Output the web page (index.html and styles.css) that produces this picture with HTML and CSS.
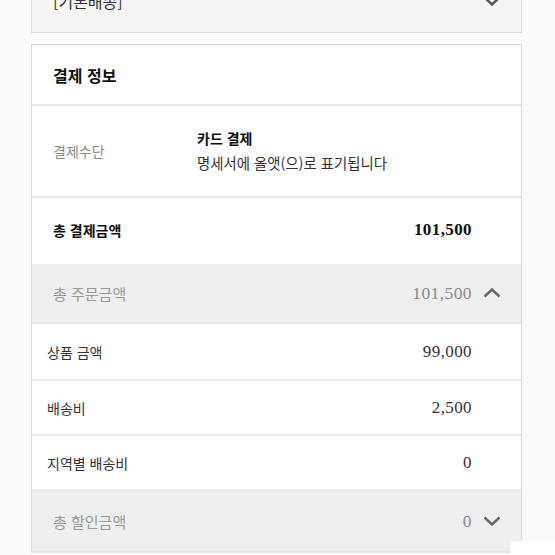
FILE: index.html
```html
<!DOCTYPE html>
<html lang="ko">
<head>
<meta charset="utf-8">
<link rel="stylesheet" href="styles.css">
</head>
<body>
<div class="page">
  <div class="ship-box">
    <span class="ship-text">[기본배송]</span>
    <svg class="chev chev-top" width="18" height="10" viewBox="0 0 18 10"><path d="M1.5 1.5 L9 8.5 L16.5 1.5" fill="none" stroke="#555" stroke-width="2.4"/></svg>
  </div>

  <section class="card">
    <div class="card-head">결제 정보</div>

    <div class="method-row">
      <div class="method-label">결제수단</div>
      <div class="method-body">
        <div class="method-title">카드 결제</div>
        <div class="method-desc">명세서에 올앳(으)로 표기됩니다</div>
      </div>
    </div>

    <div class="row row-total">
      <span class="lbl">총 결제금액</span>
      <span class="num num-bold">101,500</span>
    </div>

    <div class="row row-group">
      <span class="lbl">총 주문금액</span>
      <span class="num">101,500</span>
      <svg class="chev" width="18" height="10" viewBox="0 0 18 10"><path d="M1.5 8.5 L9 1.5 L16.5 8.5" fill="none" stroke="#666" stroke-width="2.4"/></svg>
    </div>

    <div class="row row-sub row-sub1">
      <span class="lbl">상품 금액</span>
      <span class="num">99,000</span>
    </div>
    <div class="row row-sub">
      <span class="lbl">배송비</span>
      <span class="num">2,500</span>
    </div>
    <div class="row row-sub">
      <span class="lbl">지역별 배송비</span>
      <span class="num">0</span>
    </div>

    <div class="row row-group row-last">
      <span class="lbl">총 할인금액</span>
      <span class="num">0</span>
      <svg class="chev" width="18" height="10" viewBox="0 0 18 10"><path d="M1.5 1.5 L9 8.5 L16.5 1.5" fill="none" stroke="#666" stroke-width="2.4"/></svg>
    </div>
  </section>
</div>
<div class="corner-patch"></div>
</body>
</html>
```

FILE: styles.css
```css
* { box-sizing: border-box; }
html, body {
  margin: 0;
  padding: 0;
  background: #fafafa;
  font-family: "Noto Sans CJK KR", "Noto Sans", sans-serif;
  color: #222;
  overflow: hidden;
}
.page {
  width: 491px;
  margin-left: 31px;
}
.ship-box {
  margin-top: -28px;
  height: 61px;
  background: #f5f5f5;
  border: 1px solid #dedede;
  border-top: none;
  display: flex;
  align-items: center;
  justify-content: space-between;
  padding: 0 20px 0 21px;
}
.ship-text {
  font-size: 16px;
  color: #333;
  margin-top: -2px;
}
.chev-top { margin-top: -2px; }
.card {
  margin-top: 11px;
  background: #fff;
  border: 1px solid #dcdcdc;
  border-bottom-width: 2px;
  border-bottom-color: #e4e4e4;
}
.card-head {
  height: 61px;
  display: flex;
  align-items: center;
  padding-left: 21px;
  font-size: 16px;
  font-weight: 700;
  color: #111;
  border-bottom: 2px solid #ebebeb;
}
.method-row {
  height: 92px;
  display: flex;
  align-items: center;
  padding-left: 21px;
  border-bottom: 2px solid #ebebeb;
}
.method-label {
  width: 144px;
  font-size: 14px;
  color: #8a8a8a;
}
.method-body {
  display: flex;
  flex-direction: column;
  gap: 4px;
  margin-top: -2px;
}
.method-title {
  font-size: 14px;
  font-weight: 700;
  color: #111;
}
.method-desc {
  font-size: 14.4px;
  color: #333;
}
.row {
  display: flex;
  align-items: center;
  padding: 0 49px 0 21px;
}
.lbl { flex: 1; font-size: 14px; }
.num {
  font-family: "Liberation Serif", "Times New Roman", serif;
  font-size: 17px;
  letter-spacing: 0.4px;
  color: #333;
}
.num-bold { font-weight: 700; color: #111; }
.row-total {
  height: 66px;
  padding-bottom: 2px;
}
.row-total .lbl { font-weight: 700; color: #111; }
.row-group {
  height: 60px;
  background: #efefef;
  padding-right: 20px;
  border-bottom: 2px solid #e6e6e6;
}
.row-group .lbl { font-size: 15px; color: #9a9a9a; }
.row-group .num { color: #8a8a8a; font-size: 17.5px; }
.row-group .chev { margin-left: 11px; }
.row-last { border-bottom: none; }
.row-sub {
  height: 55px;
  padding-left: 15px;
  border-bottom: 2px solid #ededed;
}
.row-sub1 { height: 57px; }
.row-sub .lbl { color: #333; }
.corner-patch {
  position: fixed;
  right: 0;
  bottom: 0;
  width: 45px;
  height: 14px;
  background: #fff;
}
```
